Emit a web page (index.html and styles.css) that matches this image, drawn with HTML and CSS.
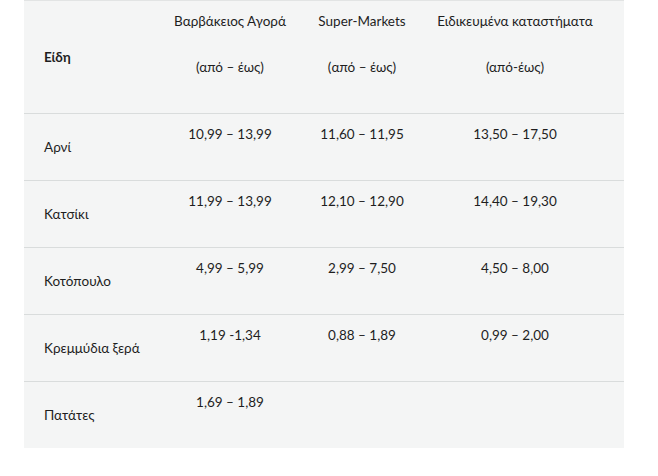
FILE: index.html
```html
<!DOCTYPE html>
<html lang="el">
<head>
<meta charset="utf-8">
<link rel="stylesheet" href="styles.css">
</head>
<body>
<table class="prices">
  <colgroup>
    <col class="c1"><col class="c2"><col class="c3"><col class="c4">
  </colgroup>
  <thead>
    <tr>
      <th class="item">Είδη</th>
      <th>Βαρβάκειος Αγορά<br><br>(από – έως)</th>
      <th>Super-Markets<br><br>(από – έως)</th>
      <th class="last">Ειδικευμένα καταστήματα<br><br>(από-έως)</th>
    </tr>
  </thead>
  <tbody>
    <tr><td class="item">Αρνί</td><td>10,99 – 13,99</td><td>11,60 – 11,95</td><td class="last">13,50 – 17,50</td></tr>
    <tr><td class="item">Κατσίκι</td><td>11,99 – 13,99</td><td>12,10 – 12,90</td><td class="last">14,40 – 19,30</td></tr>
    <tr><td class="item">Κοτόπουλο</td><td>4,99 – 5,99</td><td>2,99 – 7,50</td><td class="last">4,50 – 8,00</td></tr>
    <tr><td class="item">Κρεμμύδια ξερά</td><td>1,19 -1,34</td><td>0,88 – 1,89</td><td class="last">0,99 – 2,00</td></tr>
    <tr><td class="item">Πατάτες</td><td>1,69 – 1,89</td><td></td><td class="last"></td></tr>
  </tbody>
</table>
</body>
</html>
```

FILE: styles.css
```css
html, body {
  margin: 0;
  padding: 0;
  background: #ffffff;
}
body {
  padding: 0 34px 0 24px;
  font-family: "Lato", "Noto Sans", sans-serif;
  font-size: 13.5px;
  color: #1e1e1e;
}
.prices {
  width: 600px;
  border-collapse: collapse;
  background: #f4f5f5;
  table-layout: fixed;
  border-top: 1px solid #e2e4e4;
}
.c1 { width: 146px; }
.c2 { width: 120px; }
.c3 { width: 144px; }
.c4 { width: 190px; }
.prices th,
.prices td {
  padding: 9px 0 0 0;
  text-align: center;
  vertical-align: top;
  line-height: 23px;
  font-weight: normal;
  border-bottom: 1px solid #d9dcdc;
}
.prices th { height: 103px; }
.prices td { height: 57px; }
.prices tbody tr:last-child td { border-bottom: none; }
.prices .item {
  text-align: left;
  vertical-align: middle;
  padding: 0 0 0 20px;
}
.prices th.item { font-weight: bold; }
.prices .last { padding-right: 28px; }
```
